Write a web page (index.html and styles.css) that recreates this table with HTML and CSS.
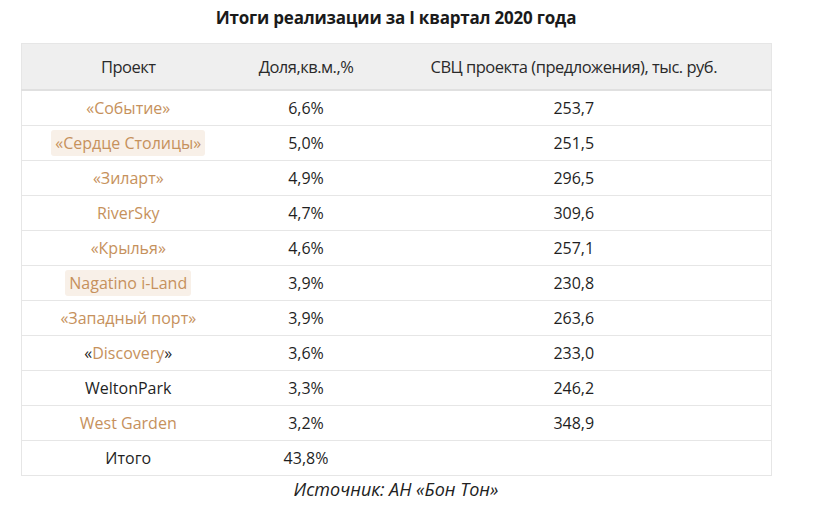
FILE: index.html
```html
<!DOCTYPE html>
<html lang="ru">
<head>
<meta charset="utf-8">
<link rel="stylesheet" href="styles.css">
</head>
<body>
<div class="wrap">
  <h2 class="title">Итоги реализации за I квартал 2020 года</h2>
  <table class="tbl">
    <colgroup><col class="c1"><col class="c2"><col class="c3"></colgroup>
    <thead>
      <tr><th>Проект</th><th>Доля,кв.м.,%</th><th>СВЦ проекта (предложения), тыс. руб.</th></tr>
    </thead>
    <tbody>
      <tr><td><span class="lnk">«Событие»</span></td><td>6,6%</td><td>253,7</td></tr>
      <tr><td><span class="lnk hl">«Сердце Столицы»</span></td><td>5,0%</td><td>251,5</td></tr>
      <tr><td><span class="lnk">«Зиларт»</span></td><td>4,9%</td><td>296,5</td></tr>
      <tr><td><span class="lnk">RiverSky</span></td><td>4,7%</td><td>309,6</td></tr>
      <tr><td><span class="lnk">«Крылья»</span></td><td>4,6%</td><td>257,1</td></tr>
      <tr><td><span class="lnk hl">Nagatino i-Land</span></td><td>3,9%</td><td>230,8</td></tr>
      <tr><td><span class="lnk">«Западный порт»</span></td><td>3,9%</td><td>263,6</td></tr>
      <tr><td>«<span class="lnk">Discovery</span>»</td><td>3,6%</td><td>233,0</td></tr>
      <tr><td>WeltonPark</td><td>3,3%</td><td>246,2</td></tr>
      <tr><td><span class="lnk">West Garden</span></td><td>3,2%</td><td>348,9</td></tr>
      <tr><td>Итого</td><td>43,8%</td><td></td></tr>
    </tbody>
  </table>
  <p class="src">Источник: АН «Бон Тон»</p>
</div>
</body>
</html>
```
FILE: styles.css
```css
html, body { margin: 0; padding: 0; background: #fff; }
body { font-family: "Open Sans", "Noto Sans", sans-serif; color: #222; }
.wrap { width: 750px; margin-left: 21px; display: flex; flex-direction: column; align-items: center; }
.title {
  margin: 7px 0 0;
  height: 36px;
  font-weight: bold;
  font-size: 17px;
  line-height: 22px;
  letter-spacing: -0.2px;
  color: #1a1a1a;
  text-align: center;
}
.tbl { width: 750px; border-collapse: collapse; table-layout: fixed; }
.c1 { width: 214px; }
.c2 { width: 142px; }
.c3 { width: 394px; }
.tbl th {
  background: #efefef;
  height: 45px;
  padding: 0;
  border-top: 1px solid #e6e6e6;
  border-bottom: 2px solid #e0e0e0;
  font-weight: normal;
  font-size: 16.5px;
  letter-spacing: -0.5px;
  color: #2a2a2a;
  text-align: center;
}
.tbl th:first-child { border-left: 1px solid #e6e6e6; }
.tbl th:last-child { border-right: 1px solid #e6e6e6; }
.tbl td {
  height: 34px;
  padding: 0;
  border-bottom: 1px solid #e6e6e6;
  font-size: 16px;
  text-align: center;
  color: #1f1f1f;
}
.tbl td:first-child { border-left: 1px solid #e6e6e6; }
.tbl td:last-child { border-right: 1px solid #e6e6e6; }
.lnk { color: #c6915c; }
.hl { background: #f8f0e8; border-radius: 3px; padding: 2px 4px; }
.src {
  margin: 1px 0 0;
  font-style: italic;
  font-size: 18px;
  color: #222;
}
```
